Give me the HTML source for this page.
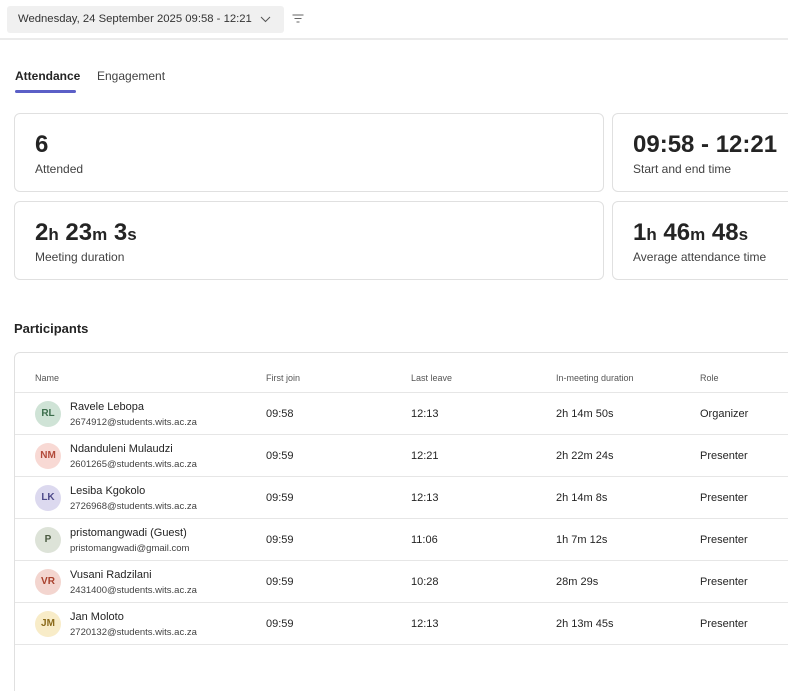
<!DOCTYPE html>
<html style="width:788px;height:691px;overflow:hidden"><head><style>
*{box-sizing:border-box;margin:0;padding:0}
body{width:788px;height:691px;overflow:hidden;background:#fff;font-family:"Liberation Sans",sans-serif;color:#242424;position:relative}
.a{position:absolute}
.card{position:absolute;border:1px solid #e0e0e0;border-radius:6px;background:#fff}
.big{position:absolute;left:20px;top:17px;font-size:24px;font-weight:bold;color:#242424}
.big small{font-size:17px}
.lbl{position:absolute;left:20px;top:48px;font-size:12px;color:#424242}
.row{position:absolute;left:15px;width:773px;height:42px;border-bottom:1px solid #e6e6e6;font-size:11px}
.av{position:absolute;left:20px;top:8px;width:26px;height:26px;border-radius:50%;font-size:10px;font-weight:bold;text-align:center;line-height:26px}
.nm{position:absolute;left:55px;top:8px;font-size:11px;color:#242424}
.em{position:absolute;left:55px;top:24px;font-size:9.5px;color:#424242}
.c{position:absolute;top:15px}
</style></head><body>
<div class="a" style="left:7px;top:6px;width:277px;height:27px;background:#f0f0f0;border-radius:3px;font-size:11.3px;line-height:27px;padding-left:11px;color:#333;white-space:nowrap">Wednesday, 24 September 2025 09:58 - 12:21
<svg style="position:absolute;left:253px;top:10px" width="11" height="7"><path d="M1 1 L5.5 5.5 L10 1" stroke="#555" fill="none"/></svg></div>
<svg class="a" style="left:292px;top:14px" width="12" height="10"><path d="M0.5 1H11.5M2.5 4.5H9.5M4.5 8H7.5" stroke="#666" fill="none"/></svg>
<div class="a" style="left:0;top:38px;width:788px;height:2px;background:#ebebeb"></div>
<div class="a" style="left:15px;top:69px;font-size:12px;font-weight:bold">Attendance</div>
<div class="a" style="left:15px;top:90px;width:61px;height:3px;background:#5b5fc7;border-radius:2px"></div>
<div class="a" style="left:97px;top:69px;font-size:12px;color:#424242">Engagement</div>
<div class="card" style="left:14px;top:113px;width:590px;height:79px"><div class="big">6</div><div class="lbl">Attended</div></div>
<div class="card" style="left:612px;top:113px;width:190px;height:79px"><div class="big">09:58 - 12:21</div><div class="lbl">Start and end time</div></div>
<div class="card" style="left:14px;top:201px;width:590px;height:79px"><div class="big">2<small>h</small> 23<small>m</small> 3<small>s</small></div><div class="lbl">Meeting duration</div></div>
<div class="card" style="left:612px;top:201px;width:190px;height:79px"><div class="big">1<small>h</small> 46<small>m</small> 48<small>s</small></div><div class="lbl">Average attendance time</div></div>
<div class="a" style="left:14px;top:321px;font-size:13px;font-weight:bold">Participants</div>
<div class="card" style="left:14px;top:352px;width:790px;height:350px"></div>
<div class="row" style="top:366px;height:27px;font-size:9px;color:#555"><span class="c" style="left:20px;top:7px">Name</span><span class="c" style="left:251px;top:7px">First join</span><span class="c" style="left:396px;top:7px">Last leave</span><span class="c" style="left:541px;top:7px">In-meeting duration</span><span class="c" style="left:685px;top:7px">Role</span></div>
<div class="row" style="top:393px"><div class="av" style="background:#cfe3d6;color:#3c6e4c">RL</div><div class="nm">Ravele Lebopa</div><div class="em">2674912@students.wits.ac.za</div><span class="c" style="left:251px">09:58</span><span class="c" style="left:396px">12:13</span><span class="c" style="left:541px">2h 14m 50s</span><span class="c" style="left:685px">Organizer</span></div>
<div class="row" style="top:435px"><div class="av" style="background:#f8d9d4;color:#b24a3a">NM</div><div class="nm">Ndanduleni Mulaudzi</div><div class="em">2601265@students.wits.ac.za</div><span class="c" style="left:251px">09:59</span><span class="c" style="left:396px">12:21</span><span class="c" style="left:541px">2h 22m 24s</span><span class="c" style="left:685px">Presenter</span></div>
<div class="row" style="top:477px"><div class="av" style="background:#dcd9ef;color:#4e4a8a">LK</div><div class="nm">Lesiba Kgokolo</div><div class="em">2726968@students.wits.ac.za</div><span class="c" style="left:251px">09:59</span><span class="c" style="left:396px">12:13</span><span class="c" style="left:541px">2h 14m 8s</span><span class="c" style="left:685px">Presenter</span></div>
<div class="row" style="top:519px"><div class="av" style="background:#dde3d8;color:#4a5a40">P</div><div class="nm">pristomangwadi (Guest)</div><div class="em">pristomangwadi@gmail.com</div><span class="c" style="left:251px">09:59</span><span class="c" style="left:396px">11:06</span><span class="c" style="left:541px">1h 7m 12s</span><span class="c" style="left:685px">Presenter</span></div>
<div class="row" style="top:561px"><div class="av" style="background:#f3d5cf;color:#a8402c">VR</div><div class="nm">Vusani Radzilani</div><div class="em">2431400@students.wits.ac.za</div><span class="c" style="left:251px">09:59</span><span class="c" style="left:396px">10:28</span><span class="c" style="left:541px">28m 29s</span><span class="c" style="left:685px">Presenter</span></div>
<div class="row" style="top:603px"><div class="av" style="background:#f8ecc8;color:#8a6a1a">JM</div><div class="nm">Jan Moloto</div><div class="em">2720132@students.wits.ac.za</div><span class="c" style="left:251px">09:59</span><span class="c" style="left:396px">12:13</span><span class="c" style="left:541px">2h 13m 45s</span><span class="c" style="left:685px">Presenter</span></div>
</body></html>
